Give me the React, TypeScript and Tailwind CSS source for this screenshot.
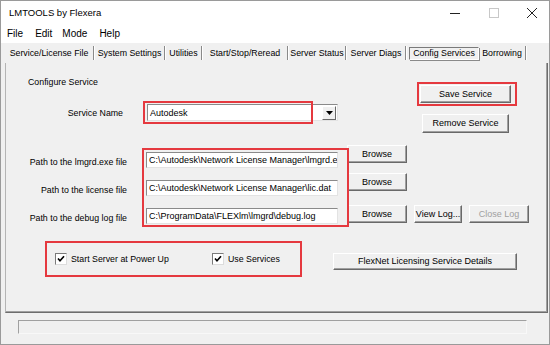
import React from 'react';

const font = { fontFamily: '"Liberation Sans", Arial, sans-serif' };

// classic raised 3D push button
function Btn({ children, className = '', disabled = false }: { children: React.ReactNode; className?: string; disabled?: boolean }) {
  return (
    <div
      className={`flex items-center justify-center bg-[#f0f0f0] border border-t-white border-l-white border-r-[#696969] border-b-[#696969] shadow-[inset_-1px_-1px_0_#a0a0a0] text-[9px] leading-none ${
        disabled ? 'text-[#a0a0a0]' : 'text-black'
      } ${className}`}
    >
      {children}
    </div>
  );
}

// sunken text field
function Field({ value, className = '' }: { value: string; className?: string }) {
  return (
    <div
      className={`flex items-center bg-white border border-t-[#8a8a8a] border-l-[#8a8a8a] border-r-[#e3e3e3] border-b-[#e3e3e3] overflow-hidden whitespace-nowrap text-[9px] leading-none text-black pl-[2px] ${className}`}
    >
      {value}
    </div>
  );
}

function CheckBox() {
  return (
    <div className="w-[12px] h-[12px] bg-white border border-t-[#7a7a7a] border-l-[#7a7a7a] border-r-[#dcdcdc] border-b-[#dcdcdc] flex items-center justify-center">
      <svg width="8" height="8" viewBox="0 0 8 8">
        <polyline points="1,3.5 3,5.8 7,1.2" fill="none" stroke="#000" strokeWidth="1.6" />
      </svg>
    </div>
  );
}

function Sep() {
  return <div className="w-[2px] h-[14px] border-l border-l-[#8a8a8a] border-r border-r-white" />;
}

const tabs: { label: string; w: string }[] = [
  { label: 'Service/License File', w: 'w-[88px]' },
  { label: 'System Settings', w: 'w-[69px]' },
  { label: 'Utilities', w: 'w-[35px]' },
  { label: 'Start/Stop/Reread', w: 'w-[84px]' },
  { label: 'Server Status', w: 'w-[56px]' },
  { label: 'Server Diags', w: 'w-[58px]' },
];

export default function App() {
  return (
    <div style={font} className="relative w-[550px] h-[345px] overflow-hidden bg-[#f0f0f0] border border-[#9a9a9a] text-black">
      {/* Title bar */}
      <div className="h-[24px] bg-white flex items-center">
        <div className="pl-[8px] text-[9.5px] leading-none">LMTOOLS by Flexera</div>
        <div className="ml-auto flex items-center h-full">
          <svg width="12" height="12" viewBox="0 0 12 12" className="mr-[27px]">
            <line x1="1" y1="6.5" x2="11" y2="6.5" stroke="#222" strokeWidth="1" />
          </svg>
          <svg width="12" height="12" viewBox="0 0 12 12" className="mr-[26px]">
            <rect x="1.5" y="1.5" width="9" height="9" fill="none" stroke="#c8c8c8" strokeWidth="1" />
          </svg>
          <svg width="12" height="12" viewBox="0 0 12 12" className="mr-[11px]">
            <line x1="1" y1="1" x2="11" y2="11" stroke="#222" strokeWidth="1" />
            <line x1="11" y1="1" x2="1" y2="11" stroke="#222" strokeWidth="1" />
          </svg>
        </div>
      </div>

      {/* Menu bar */}
      <div className="h-[18px] bg-white flex items-center text-[10px] leading-none pl-[6px]">
        <span>File</span>
        <span className="ml-[12px]">Edit</span>
        <span className="ml-[10px]">Mode</span>
        <span className="ml-[12px]">Help</span>
      </div>

      {/* Tabs */}
      <div className="h-[20px] flex items-center pl-[4px] text-[8.8px] leading-none">
        {tabs.map((t) => (
          <React.Fragment key={t.label}>
            <div className={`${t.w} text-center whitespace-nowrap`}>{t.label}</div>
            <Sep />
          </React.Fragment>
        ))}
        <div className="ml-[2px] w-[70px] h-[13px] flex items-center justify-center whitespace-nowrap border border-t-[#7a7a7a] border-l-[#7a7a7a] border-r-white border-b-white shadow-[1px_1px_0_#8a8a8a]">
          Config Services
        </div>
        <div className="w-[46px] text-center whitespace-nowrap">Borrowing</div>
        <Sep />
      </div>

      {/* Tab panel */}
      <div className="relative ml-[4px] w-[543px] h-[250px] border-l border-l-[#b4b4b4] border-r border-r-[#6d6d6d] border-b border-b-[#6d6d6d] shadow-[inset_-1px_-1px_0_#a0a0a0] text-[8.8px] leading-[10px]">
        {/* Section: service name + save/remove */}
        <div className="flex h-[82px]">
          <div className="w-[414px]">
            <div className="pl-[22px] pt-[14px] leading-[10px]">Configure Service</div>
            <div className="mt-[17px] h-[17px] flex items-center">
              <div className="w-[117px] text-right">Service Name</div>
              <div className="ml-[24px] w-[191px] h-[17px] flex bg-white border border-t-[#8a8a8a] border-l-[#8a8a8a] border-r-[#e3e3e3] border-b-[#e3e3e3]">
                <div className="flex-1 flex items-center pl-[2px] text-[9px]">Autodesk</div>
                <div className="w-[14px] h-[14px] mt-[1px] mr-[1px] bg-[#f0f0f0] border border-t-white border-l-white border-r-[#696969] border-b-[#696969] flex items-center justify-center">
                  <svg width="7" height="4" viewBox="0 0 7 4">
                    <polygon points="0,0 7,0 3.5,4" fill="#000" />
                  </svg>
                </div>
              </div>
            </div>
          </div>
          <div className="pt-[22px]">
            <Btn className="w-[91px] h-[18px]">Save Service</Btn>
            <Btn className="mt-[11px] ml-[2px] w-[87px] h-[19px]">Remove Service</Btn>
          </div>
        </div>

        {/* Section: paths */}
        <div className="h-[28px] flex items-start">
          <div className="w-[121px] text-right mt-[12px]">Path to the lmgrd.exe file</div>
          <Field className="ml-[19px] mt-[7px] w-[192px] h-[16px]" value="C:\Autodesk\Network License Manager\lmgrd.exe" />
          <Btn className="ml-[9px] w-[60px] h-[18px]">Browse</Btn>
        </div>
        <div className="h-[32px] flex items-start">
          <div className="w-[121px] text-right mt-[12px]">Path to the license file</div>
          <Field className="ml-[19px] mt-[7px] w-[192px] h-[16px]" value="C:\Autodesk\Network License Manager\lic.dat" />
          <Btn className="ml-[9px] w-[60px] h-[18px]">Browse</Btn>
        </div>
        <div className="h-[18px] flex items-start">
          <div className="w-[121px] text-right mt-[8px]">Path to the debug log file</div>
          <Field className="ml-[19px] mt-[3px] w-[192px] h-[16px]" value="C:\ProgramData\FLEXlm\lmgrd\debug.log" />
          <Btn className="ml-[9px] w-[60px] h-[18px]">Browse</Btn>
          <Btn className="ml-[7px] w-[48px] h-[18px]">View Log...</Btn>
          <Btn className="ml-[7px] w-[60px] h-[18px]" disabled>
            Close Log
          </Btn>
        </div>

        {/* Section: options */}
        <div className="mt-[30px] flex items-start pl-[49px]">
          <div className="w-[157px] h-[12px] flex items-center">
            <CheckBox />
            <span className="ml-[4px] whitespace-nowrap">Start Server at Power Up</span>
          </div>
          <div className="w-[121px] h-[12px] flex items-center">
            <CheckBox />
            <span className="ml-[4px] whitespace-nowrap">Use Services</span>
          </div>
          <Btn className="w-[184px] h-[17px]">FlexNet Licensing Service Details</Btn>
        </div>

        {/* red annotation boxes */}
        <div className="absolute left-[137px] top-[38px] w-[170px] h-[23px] border-2 border-[#e5393f]" />
        <div className="absolute left-[136px] top-[85px] w-[207px] h-[79px] border-2 border-[#e5393f]" />
        <div className="absolute left-[411px] top-[19px] w-[100px] h-[24px] border-2 border-[#e5393f]" />
        <div className="absolute left-[39px] top-[178px] w-[257px] h-[36px] border-2 border-[#e5393f]" />
      </div>

      {/* Status bar */}
      <div className="mt-[7px] ml-[17px] w-[509px] h-[14px] border border-t-[#a0a0a0] border-l-[#a0a0a0] border-r-[#f8f8f8] border-b-[#f8f8f8]" />
    </div>
  );
}
